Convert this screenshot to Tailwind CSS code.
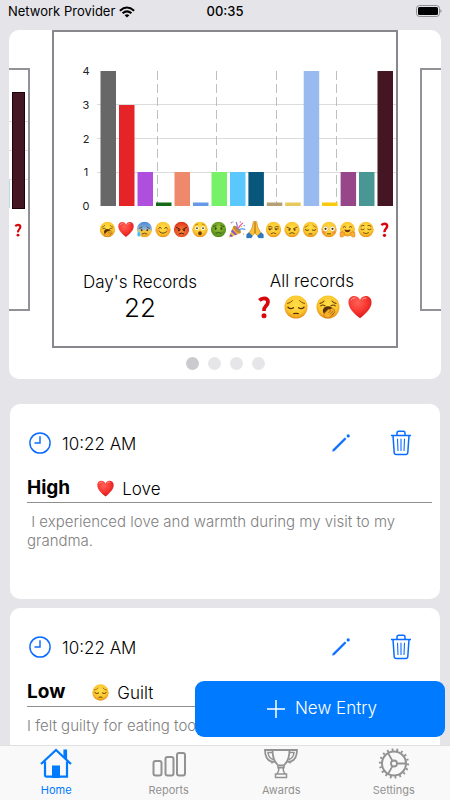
<!DOCTYPE html>
<html lang="en">
<head>
<meta charset="utf-8">
<meta name="viewport" content="width=device-width, initial-scale=1">
<title>Home</title>
<script src="https://cdn.jsdelivr.net/npm/@tailwindcss/browser@4"></script>
</head>
<body class="flex h-screen flex-col overflow-hidden bg-[#e5e4e9] font-[Inter,'Liberation_Sans',sans-serif] font-light text-black">

<!-- Shared symbols -->
<svg class="absolute size-0" aria-hidden="true">
  <defs>
    <radialGradient id="gold" cx=".5" cy=".4" r=".6"><stop offset="0" stop-color="#ffe04a"/><stop offset=".7" stop-color="#fcc52c"/><stop offset="1" stop-color="#e58d18"/></radialGradient>
    <radialGradient id="angry" cx=".5" cy=".6" r=".6"><stop offset="0" stop-color="#fb8a35"/><stop offset="1" stop-color="#dc3220"/></radialGradient>
    <radialGradient id="sick" cx=".5" cy=".4" r=".6"><stop offset="0" stop-color="#9cc435"/><stop offset="1" stop-color="#4f8a1c"/></radialGradient>
    <radialGradient id="red" cx=".4" cy=".3" r=".7"><stop offset="0" stop-color="#ff6257"/><stop offset=".6" stop-color="#f8342e"/><stop offset="1" stop-color="#d11a1f"/></radialGradient>
    <linearGradient id="cold" x2="0" y2="1"><stop offset="0" stop-color="#4a86d8"/><stop offset=".45" stop-color="#86b4dc"/><stop offset=".62" stop-color="#fbc93a"/><stop offset="1" stop-color="#f0a020"/></linearGradient>
  </defs>
  <symbol id="yawn" viewBox="0 0 24 24">
    <circle cx="12" cy="12" r="11.500" fill="url(#gold)"/>
    <path d="M4 8.400q2.500-.3 4-2.400M16 6q1.500 2.100 4 2.400M4.800 10.800q2-1.600 4.200 0M15 10.800q2.200-1.600 4.200 0" fill="none" stroke="#6b3f0c" stroke-width="1.100" stroke-linecap="round"/>
    <ellipse cx="12" cy="15.800" rx="5.200" ry="4.500" fill="#54300b"/>
    <path d="M8.500 22q-1.500-2.500.2-4.200l3.600-3.500q1-.7 1.300.3l2.600-1.600q1.100-.1.800.9l1.100.200q1 .6.300 1.500 1.200.400.400 1.500l-3.500 4.300q-3 2.800-6.800.6z" fill="#f7b02a" stroke="#a8650f" stroke-width=".6"/>
    <path d="m12.500 18 2.700-3m-1.200 4.500 3.400-3.700m-1.800 4.600 2.800-3" stroke="#8a4f0e" stroke-width=".7"/>
  </symbol>
  <symbol id="heart" viewBox="0 0 24 24">
    <path d="M12 23.300Q2 16 .7 9.500C-.6 3 3.500.8 6.500.9 9.300 1 11.300 2.900 12 5 12.700 2.900 14.700 1 17.500.9 20.500.8 24.600 3 23.300 9.500 22 16 12 23.300 12 23.300z" fill="url(#red)"/>
    <path d="M3 5q1.500-2.500 4-2.200M14.500 4.200q1.500-1.600 3.500-1.200" fill="none" stroke="#ffa9a0" stroke-width="1" stroke-linecap="round"/>
  </symbol>
  <symbol id="anxious" viewBox="0 0 24 24">
    <circle cx="12" cy="12" r="11.500" fill="url(#cold)"/>
    <path d="M4.500 10.200q2.500-.3 4-2M15.500 8.200q1.500 1.700 4 2M8.500 18.600q3.500-2.600 7 0" fill="none" stroke="#5b3a14" stroke-width="1.300" stroke-linecap="round"/>
    <ellipse cx="7.800" cy="13" rx="1.300" ry="1.700" fill="#5b3a14"/><ellipse cx="16.200" cy="13" rx="1.300" ry="1.700" fill="#5b3a14"/>
    <path d="M3.500 13.500q4 5.500 2.500 8-2 2-4.300.3Q-.6 19.500 3.500 13.500z" fill="#4db9f3" stroke="#d9f2ff" stroke-width=".6"/>
  </symbol>
  <symbol id="smile" viewBox="0 0 24 24">
    <circle cx="12" cy="12" r="11.500" fill="url(#gold)"/>
    <circle cx="4.500" cy="14" r="3" fill="#f58b3c" opacity=".55"/><circle cx="19.500" cy="14" r="3" fill="#f58b3c" opacity=".55"/>
    <path d="M5.500 10q2-3 4 0M14.500 10q2-3 4 0M7 15.500q5 4.500 10 0" fill="none" stroke="#66400e" stroke-width="1.500" stroke-linecap="round"/>
  </symbol>
  <symbol id="rage" viewBox="0 0 24 24">
    <circle cx="12" cy="12" r="11.500" fill="url(#angry)"/>
    <path d="m4.500 9 5.500 2.800M19.500 9 14 11.800M8.500 18.500q3.500-2.600 7 0" fill="none" stroke="#4d1b0c" stroke-width="1.500" stroke-linecap="round"/>
    <circle cx="8" cy="13" r="1.500" fill="#4d1b0c"/><circle cx="16" cy="13" r="1.500" fill="#4d1b0c"/>
  </symbol>
  <symbol id="astonished" viewBox="0 0 24 24">
    <circle cx="12" cy="12" r="11.500" fill="url(#gold)"/>
    <circle cx="7.500" cy="10" r="2.800" fill="#fff"/><circle cx="16.500" cy="10" r="2.800" fill="#fff"/>
    <circle cx="7.500" cy="10" r="1.300" fill="#54300b"/><circle cx="16.500" cy="10" r="1.300" fill="#54300b"/>
    <path d="M5 5.500q1.500-1.700 4-1.500M19 5.500Q17.500 3.800 15 4" fill="none" stroke="#85520f" stroke-width="1"/>
    <ellipse cx="12" cy="17.500" rx="2.700" ry="3" fill="#6a3510"/>
  </symbol>
  <symbol id="nausea" viewBox="0 0 24 24">
    <circle cx="12" cy="12" r="11.500" fill="url(#sick)"/>
    <ellipse cx="7.800" cy="10.500" rx="1.400" ry="1.900" fill="#2b4610"/><ellipse cx="16.200" cy="10.500" rx="1.400" ry="1.900" fill="#2b4610"/>
    <path d="M4.500 7.500q2 0 4-1.500M19.500 7.500q-2 0-4-1.500M8.500 17.500q3.500-2.500 7 0" fill="none" stroke="#2b4610" stroke-width="1.300" stroke-linecap="round"/>
    <path d="M4.500 16q2 2.500 4.500 1M19.500 16q-2 2.500-4.500 1" fill="none" stroke="#4d7a1c" stroke-width="1"/>
  </symbol>
  <symbol id="party" viewBox="0 0 24 24">
    <path d="M7 7.500 1 23l16-6.500q-1-6-10-9z" fill="#f4bb35"/>
    <path d="m5.500 11.500 7 7-3 1.300-5.300-5zM3.200 17.500l3.600 3.500-2.500 1-2.200-2z" fill="#8d55c5"/>
    <ellipse cx="12" cy="12" rx="2.800" ry="6.500" transform="rotate(-46 12 12)" fill="#c08a3a"/>
    <path d="M12 11q1-5-1-9" fill="none" stroke="#8d66d8" stroke-width="1.500"/>
    <path d="M13 12q2-5 7-9" fill="none" stroke="#ec5d9b" stroke-width="1.500"/>
    <path d="M14 13q4-3 9-1" fill="none" stroke="#4a9be8" stroke-width="1.500"/>
    <path d="m3 3 2-1 .5 2zM15 2l2-1v2z" fill="#e04444"/><path d="m20 7 2-1 1 2zM6 1l2 1-2 1z" fill="#3b9de8"/><path d="m20 17 2 1-1 2zM17 7l2 1-2 1z" fill="#f29a28"/>
  </symbol>
  <symbol id="pray" viewBox="0 0 24 24">
    <path d="M11.600 1q-1.700-.6-2 1.500L8 10l-4 6.500 4.500 4L12 17zM12.400 1q1.700-.6 2 1.500L16 10l4 6.500-4.500 4L12 17z" fill="#fcc13a" stroke="#c9820f" stroke-width=".8"/>
    <path d="M12 2v15" stroke="#b0700e" stroke-width=".8"/>
    <path d="M3.800 15.500 9 20.500 7 23.500H.5v-5zM20.200 15.500 15 20.500l2 3h6.500v-5z" fill="#2e78bd"/>
  </symbol>
  <symbol id="unamused" viewBox="0 0 24 24">
    <circle cx="12" cy="12" r="11.500" fill="url(#gold)"/>
    <path d="M4.500 8q3-1.500 5.500.3M14 8.300q3-1.700 5.500-.3M4.800 11h5M14 11h5M8.500 18q3.500-2.500 7 0" fill="none" stroke="#66400e" stroke-width="1.300" stroke-linecap="round"/>
    <circle cx="6.500" cy="12" r="1.300" fill="#54300b"/><circle cx="15.800" cy="12" r="1.300" fill="#54300b"/>
  </symbol>
  <symbol id="annoyed" viewBox="0 0 24 24">
    <circle cx="12" cy="12" r="11.500" fill="url(#gold)"/>
    <path d="m4.500 8.500 5.500 2.600M19.500 8.500 14 11.100M8.500 17.800q3.500-2.400 7 0" fill="none" stroke="#66400e" stroke-width="1.400" stroke-linecap="round"/>
    <circle cx="8" cy="12.500" r="1.400" fill="#54300b"/><circle cx="16" cy="12.500" r="1.400" fill="#54300b"/>
  </symbol>
  <symbol id="pensive" viewBox="0 0 24 24">
    <circle cx="12" cy="12" r="11.500" fill="url(#gold)"/>
    <path d="M3.500 8.500q3-.5 5-2.800M15.500 5.700q2 2.300 5 2.800" fill="none" stroke="#85520f" stroke-width="1" stroke-linecap="round"/>
    <path d="M4 12.200q2.500 2.600 5.500.6M14.500 12.800q3 2 5.500-.6M9.800 18.700q2.200-.8 4.400 0" fill="none" stroke="#54300b" stroke-width="1.300" stroke-linecap="round"/>
  </symbol>
  <symbol id="flushed" viewBox="0 0 24 24">
    <circle cx="12" cy="12" r="11.500" fill="url(#gold)"/>
    <circle cx="4.500" cy="16" r="2.800" fill="#f3763b" opacity=".55"/><circle cx="19.500" cy="16" r="2.800" fill="#f3763b" opacity=".55"/>
    <g fill="#fff" stroke="#c98a1c" stroke-width=".6"><circle cx="6.800" cy="11" r="3.900"/><circle cx="17.200" cy="11" r="3.900"/></g>
    <circle cx="6.800" cy="11" r="1.700" fill="#54300b"/><circle cx="17.200" cy="11" r="1.700" fill="#54300b"/>
    <path d="M9.500 18.500h5" stroke="#66400e" stroke-width="1.400" stroke-linecap="round"/>
  </symbol>
  <symbol id="hug" viewBox="0 0 24 24">
    <circle cx="12" cy="11.500" r="11" fill="url(#gold)"/>
    <path d="M5.500 8.500q2-2.500 4 0M14.500 8.500q2-2.500 4 0" fill="none" stroke="#66400e" stroke-width="1.400" stroke-linecap="round"/>
    <path d="M7.500 12q4.500 1.300 9 0-.5 4-4.500 4t-4.500-4z" fill="#70340f"/>
    <path d="M1 16q1.500-1 2.500.5l1-1.500q1.500 0 1.500 2l1.500-.5q1.500 1 0 3.500L5 23.500H1.500Q-.5 19 1 16zM23 16q-1.500-1-2.500.5l-1-1.500q-1.500 0-1.500 2l-1.500-.5q-1.500 1 0 3.500l2.500 3.500h3.500q2-4.500.5-7.500z" fill="#f9ae36" stroke="#d8701c" stroke-width=".7"/>
  </symbol>
  <symbol id="relieved" viewBox="0 0 24 24">
    <circle cx="12" cy="12" r="11.500" fill="url(#gold)"/>
    <path d="M4.500 7q2-2 4.500-1M15 6q2.500-1 4.500 1M4.500 11.500q2.500 2.300 5 0M14.500 11.500q2.500 2.300 5 0M8 17q4 2.600 8 0" fill="none" stroke="#66400e" stroke-width="1.300" stroke-linecap="round"/>
  </symbol>
  <symbol id="question" viewBox="0 0 24 24">
    <path d="M7.300 5.400Q9.500 3.300 12 3.300q4 0 4 3.700 0 2-2.200 4.100-2 1.900-1.800 4.900" fill="none" stroke="#d8080e" stroke-width="3.700"/>
    <circle cx="12" cy="20.800" r="2.500" fill="#d8080e"/>
  </symbol>
  <symbol id="clock" viewBox="0 0 24 24">
    <path d="M12 1a11 11 0 1 1 0 22 11 11 0 0 1 0-22zM12 4.500V12H6" fill="none" stroke="#0a6cff" stroke-width="1.600"/>
  </symbol>
  <symbol id="pencil" viewBox="0 0 20 20">
    <path d="m1.500 18.300.7-2L13.800 4.700l1.400 1.400L3.500 17.700z" fill="#0a6cff" stroke="#0a6cff" stroke-width=".5"/>
    <circle cx="17.200" cy="2.900" r="1.600" fill="#0a6cff"/>
  </symbol>
  <symbol id="trash" viewBox="0 0 20 26">
    <path d="M0 5.500h20M6 5.300V3q0-1.700 1.700-1.700h4.600Q14 1.300 14 3v2.300M2 5.500l1.200 17q.2 2 2 2h9.600q1.800 0 2-2L18 5.500" fill="none" stroke="#0a6cff" stroke-width="1.500"/>
    <path d="M6.500 8.800 7 21M10 8.800V21M13.500 8.800 13 21" fill="none" stroke="#0a6cff" stroke-width="1.100"/>
  </symbol>
</svg>

<header class="grid h-[30px] shrink-0 grid-cols-3 items-start px-2 pt-[3px] text-[13px] leading-[17px]">
  <div class="flex items-center gap-1 whitespace-nowrap font-normal">
    <span>Network Provider</span>
    <svg class="h-3 w-4" viewBox="0 0 18 12" aria-label="Wi-Fi" role="img">
      <path d="M1 4.500Q9-2.600 17 4.500M4 7.500q5-4.500 10 0" fill="none" stroke="#000" stroke-width="2.300"/>
      <path d="M6.300 9.600Q9 7.500 11.700 9.600L9 12.300z"/>
    </svg>
  </div>
  <time class="text-center font-medium">00:35</time>
  <svg class="mt-[2px] h-3 w-[27px] justify-self-end" viewBox="0 0 27 12" aria-label="Battery" role="img">
    <rect x="1.500" y=".5" width="23" height="11" rx="3" fill="none" stroke="#8f8e93"/>
    <rect x="3" y="2" width="20" height="8" rx="1.500"/>
    <path d="M25.500 4q2 2 0 4z" fill="#77767a"/>
  </svg>
</header>

<div class="relative min-h-0 flex-1">
  <main class="h-full overflow-hidden">
    <section class="mx-[9px] overflow-hidden rounded-[10px] bg-white" aria-label="Statistics">
      <div class="flex items-center">
        <div class="h-[243px] w-[21px] shrink-0 border-y-2 border-r-2 border-[#929197]">
          <svg class="h-[239px] w-[19px]" viewBox="0 0 19 239" aria-hidden="true">
            <path d="M0 51.500h19M0 80.500h19M0 109.500h19" stroke="#ddd"/>
            <path d="M.5 110v28" stroke="#b8dce0"/>
            <rect x="3.500" y="22.500" width="12" height="116" fill="#441522" stroke="#1f0008"/>
            <use href="#question" x="2" y="153" width="14" height="14"/>
          </svg>
        </div>
        <div class="mx-[22px] min-w-0 flex-1 border-2 border-[#88878d]">
          <svg class="block w-full" viewBox="0 0 342 210" role="img" aria-label="Records per emotion">
            <path d="M43 72.500h299M43 106.500h299M43 140.500h299" stroke="#dcdcdd" stroke-width="1"/>
            <path d="M103.500 39v134M162.500 39v134M222.500 39v134M282.500 39v134" stroke="#b9c1c5" stroke-width="1" stroke-dasharray="9 4"/>
            <g font-size="11" font-weight="400" text-anchor="middle" fill="#222">
              <text x="32" y="43">4</text><text x="32" y="77">3</text><text x="32" y="111">2</text><text x="32" y="144">1</text><text x="32" y="178">0</text>
            </g>
            <rect x="46.500" y="39" width="15.500" height="135" fill="#676767"/>
            <rect x="65" y="73" width="15.500" height="101" fill="#e42426"/>
            <rect x="83.500" y="140" width="15.500" height="34" fill="#ae50dd"/>
            <rect x="102" y="170.500" width="15.500" height="3.500" fill="#136b1a"/>
            <rect x="120.500" y="140" width="15.500" height="34" fill="#ef896c"/>
            <rect x="139" y="170.500" width="15.500" height="3.500" fill="#6699e8"/>
            <rect x="157.500" y="140" width="15.500" height="34" fill="#76f168"/>
            <rect x="176" y="140" width="15.500" height="34" fill="#5bc8fd"/>
            <rect x="194.400" y="140" width="15.500" height="34" fill="#08567b"/>
            <rect x="212.800" y="170.500" width="15.500" height="3.500" fill="#b49f77"/>
            <rect x="231.200" y="170.500" width="15.500" height="3.500" fill="#e8ca5c"/>
            <rect x="249.700" y="39" width="15.500" height="135" fill="#98baee"/>
            <rect x="268.100" y="170.500" width="15.500" height="3.500" fill="#fac80c"/>
            <rect x="286.600" y="140" width="15.500" height="34" fill="#974789"/>
            <rect x="305" y="140" width="15.500" height="34" fill="#489795"/>
            <rect x="323.500" y="39" width="15.500" height="135" fill="#441522"/>
            <use href="#yawn" x="45.500" y="189.500" width="16" height="16"/>
            <use href="#heart" x="64" y="189.500" width="16" height="16"/>
            <use href="#anxious" x="82.500" y="189.500" width="16" height="16"/>
            <use href="#smile" x="101" y="189.500" width="16" height="16"/>
            <use href="#rage" x="119.500" y="189.500" width="16" height="16"/>
            <use href="#astonished" x="138" y="189.500" width="16" height="16"/>
            <use href="#nausea" x="156.500" y="189.500" width="16" height="16"/>
            <use href="#party" x="174" y="188.500" width="18" height="18"/>
            <use href="#pray" x="192" y="188.500" width="18" height="18"/>
            <use href="#unamused" x="211.500" y="189.500" width="16" height="16"/>
            <use href="#annoyed" x="230" y="189.500" width="16" height="16"/>
            <use href="#pensive" x="248.500" y="189.500" width="16" height="16"/>
            <use href="#flushed" x="267" y="189.500" width="16" height="16"/>
            <use href="#hug" x="285.500" y="189.500" width="16" height="16"/>
            <use href="#relieved" x="304" y="189.500" width="16" height="16"/>
            <use href="#question" x="322.500" y="189.500" width="16" height="16"/>
          </svg>
          <div class="flex justify-between pt-7 pr-[24px] pb-[22px] pl-[29px]">
            <div class="flex flex-col items-center pt-[2px] text-center">
              <h2 class="text-[17px] leading-5">Day's Records</h2>
              <p class="text-[26px] leading-8">22</p>
            </div>
            <div class="flex flex-col items-center gap-1 pt-px">
              <h2 class="text-[17px] leading-5">All records</h2>
              <div class="flex gap-2">
                <svg class="size-6" role="img" aria-label="Unknown"><use href="#question"/></svg>
                <svg class="size-6" role="img" aria-label="Guilt"><use href="#pensive"/></svg>
                <svg class="size-6" role="img" aria-label="Tired"><use href="#yawn"/></svg>
                <svg class="size-6" role="img" aria-label="Love"><use href="#heart"/></svg>
              </div>
            </div>
          </div>
        </div>
        <div class="h-[243px] w-[21px] shrink-0 border-y-2 border-l-2 border-[#929197]"></div>
      </div>
      <div class="flex justify-center gap-[9px] pt-[9px] pb-[9px]">
        <button class="size-[13px] rounded-full bg-[#cbcacf]" aria-label="Page 1"></button>
        <button class="size-[13px] rounded-full bg-[#e6e6e8]" aria-label="Page 2"></button>
        <button class="size-[13px] rounded-full bg-[#e6e6e8]" aria-label="Page 3"></button>
        <button class="size-[13px] rounded-full bg-[#e6e6e8]" aria-label="Page 4"></button>
      </div>
    </section>

    <div class="mx-[10px] mt-[25px] flex flex-col gap-[9px]">
      <article class="min-h-[195px] rounded-[10px] bg-white pt-[26px] pr-2 pl-[17px]">
        <div class="flex h-[26px] items-center pr-[21px] pl-[2px]">
          <svg class="size-[22px]" aria-hidden="true"><use href="#clock"/></svg>
          <time class="ml-[11px] flex-1 pt-[2px] text-[17px] leading-6">10:22 AM</time>
          <button aria-label="Edit"><svg class="size-5"><use href="#pencil"/></svg></button>
          <button class="ml-10" aria-label="Delete"><svg class="h-[26px] w-5"><use href="#trash"/></svg></button>
        </div>
        <div class="mt-[18px] flex items-center border-b border-[#8f8f8f]">
          <h3 class="text-[19px] leading-7 font-bold">High</h3>
          <svg class="ml-[27px] size-[17px]" aria-hidden="true"><use href="#heart"/></svg>
          <span class="ml-2 pt-[2px] text-[17px] leading-6">Love</span>
        </div>
        <p class="mt-[9px] pr-4 text-[15px] leading-[19px] text-[#808080]">&nbsp;I experienced love and warmth during my visit to my grandma.</p>
      </article>
      <article class="min-h-[195px] rounded-[10px] bg-white pt-[26px] pr-2 pl-[17px]">
        <div class="flex h-[26px] items-center pr-[21px] pl-[2px]">
          <svg class="size-[22px]" aria-hidden="true"><use href="#clock"/></svg>
          <time class="ml-[11px] flex-1 pt-[2px] text-[17px] leading-6">10:22 AM</time>
          <button aria-label="Edit"><svg class="size-5"><use href="#pencil"/></svg></button>
          <button class="ml-10" aria-label="Delete"><svg class="h-[26px] w-5"><use href="#trash"/></svg></button>
        </div>
        <div class="mt-[18px] flex items-center border-b border-[#8f8f8f]">
          <h3 class="text-[19px] leading-7 font-bold">Low</h3>
          <svg class="ml-[27px] size-[17px]" aria-hidden="true"><use href="#pensive"/></svg>
          <span class="ml-2 pt-[2px] text-[17px] leading-6">Guilt</span>
        </div>
        <p class="mt-[9px] pr-4 text-[15px] leading-[19px] text-[#808080]">I felt guilty for eating too</p>
      </article>
    </div>
  </main>
  <button class="absolute right-[5px] bottom-2 flex h-14 w-[250px] items-center justify-center gap-[10px] rounded-[9px] bg-[#007aff] pl-1 text-[17px] text-white">
    <svg class="size-[18px]" viewBox="0 0 18 18" aria-hidden="true"><path d="M9 0v18M0 9h18" stroke="#fff" stroke-width="1.500"/></svg>
    New Entry
  </button>
</div>

<nav class="grid h-[55px] shrink-0 grid-cols-4 border-t border-[#e0e0e1] bg-[#f9f9f9] text-[11px] leading-[14px] font-normal text-[#929292]">
  <a href="#" class="flex flex-col items-center gap-1 pt-[2px] text-[#007aff]" aria-current="page">
    <svg class="h-[31px] w-8" viewBox="0 0 32 31" fill="none" stroke="#007aff" stroke-width="2" aria-hidden="true">
      <path d="M1 16 16 2l15 14M5 13.500V27q0 1.700 1.700 1.700h20.300V13.500" stroke-width="2.200"/>
      <path d="M24 2h2.500v9L24 8.700z" fill="#007aff" stroke-width="1.200"/>
      <path d="M13 18.500h6V29h-6z" fill="#007aff"/>
    </svg>
    Home
  </a>
  <a href="#" class="flex flex-col items-center gap-1 pt-[2px]">
    <svg class="h-[31px] w-[34px]" viewBox="0 0 34 31" fill="none" stroke="#929292" stroke-width="2" aria-hidden="true">
      <rect x="1.500" y="13" width="8" height="14.500" rx="2"/><rect x="13.500" y="9" width="8" height="18.500" rx="2"/><rect x="25" y="5" width="8" height="22.500" rx="2"/>
    </svg>
    Reports
  </a>
  <a href="#" class="flex flex-col items-center gap-1 pt-[2px]">
    <svg class="h-[31px] w-[34px]" viewBox="0 0 34 31" fill="none" stroke="#929292" stroke-width="1.800" aria-hidden="true">
      <path d="M8.500 2h17q0 11-6 15.500h-5Q8.500 13 8.500 2zM8.500 2H1q0 9 6 11.500l1.500.2 2 .3M25.500 2H33q0 9-6 11.500l-1.500.2-2 .3"/>
      <path d="M8.500 4.500H4q.5 5.500 5 7M25.500 4.500H30q-.5 5.500-5 7M8 13v2.500M26 13v2.500M14 17.500v2.200h6v-2.200M15 19.500q0 4-2 6.500M19 19.500q0 4 2 6.500M11.500 26h11v3.500h-11z" stroke-width="1.500"/>
    </svg>
    Awards
  </a>
  <a href="#" class="flex flex-col items-center gap-1 pt-[2px]">
    <svg class="h-[31px] w-8" viewBox="0 0 32 31" fill="none" stroke="#929292" aria-hidden="true">
      <circle cx="16" cy="15.500" r="12" stroke-width="2"/>
      <circle cx="16" cy="15.500" r="13.900" stroke-width="2.400" stroke-dasharray="1.800 3.023"/>
      <circle cx="16" cy="15.500" r="3" stroke-width="1.800"/>
      <path d="M19 15.500h9M14.500 12.900 10 5M14.500 18.100 10 26" stroke-width="1.800"/>
    </svg>
    Settings
  </a>
</nav>
</body>
</html>
